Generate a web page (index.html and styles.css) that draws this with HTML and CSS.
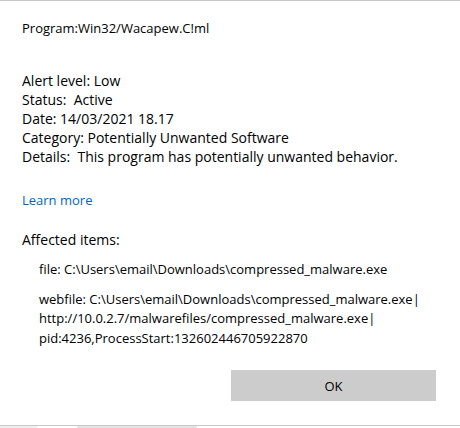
FILE: index.html
```html
<!DOCTYPE html>
<html>
<head>
<meta charset="utf-8">
<link rel="stylesheet" href="styles.css">
</head>
<body>
<div class="dialog">
  <div class="content">
    <div class="title">Program:Win32/Wacapew.C!ml</div>
    <div class="details">
      <div>Alert level: Low</div>
      <div>Status:&nbsp; Active</div>
      <div>Date: 14/03/2021 18.17</div>
      <div>Category: Potentially Unwanted Software</div>
      <div>Details:&nbsp; This program has potentially unwanted behavior.</div>
    </div>
    <a class="learn" href="#">Learn more</a>
    <div class="affected">Affected items:</div>
    <div class="item item-file">file: C:\Users\email\Downloads\compressed_malware.exe</div>
    <div class="item item-web">webfile: C:\Users\email\Downloads\compressed_malware.exe|<br>http://10.0.2.7/malwarefiles/compressed_malware.exe|<br>pid:4236,ProcessStart:132602446705922870</div>
    <div class="actions">
      <button class="ok">OK</button>
    </div>
  </div>
  <div class="footer">
    <span class="f1"></span><span class="f2"></span><span class="f3"></span>
  </div>
</div>
</body>
</html>
```
FILE: styles.css
```css
html, body {
  margin: 0;
  padding: 0;
  background: #fff;
}
body {
  width: 460px;
  height: 428px;
  overflow: hidden;
  font-family: "Open Sans", "Noto Sans", sans-serif;
  color: #000;
}
.dialog {
  border-top: 1px solid #c8c8c8;
  height: 427px;
  display: flex;
  flex-direction: column;
}
.content {
  padding: 18px 24px 0 22px;
  display: flex;
  flex-direction: column;
  height: 406px;
}
.title {
  font-size: 13px;
  line-height: 19px;
}
.details {
  margin-top: 33px;
  font-size: 14px;
  line-height: 19px;
}
.learn {
  margin-top: 25px;
  font-size: 13px;
  line-height: 19px;
  color: #0067c0;
  text-decoration: none;
  align-self: flex-start;
}
.affected {
  margin-top: 20px;
  font-size: 14px;
  line-height: 19px;
}
.item {
  font-size: 13px;
  line-height: 19.5px;
  padding-left: 17px;
  white-space: nowrap;
}
.item-file {
  margin-top: 11px;
}
.item-web {
  margin-top: 10px;
}
.actions {
  margin-top: 22px;
  display: flex;
  justify-content: flex-end;
}
.ok {
  width: 205px;
  height: 31px;
  border: none;
  background: #cccccc;
  font-family: "Open Sans", "Noto Sans", sans-serif;
  font-size: 13px;
  color: #000;
  padding: 0;
}
.footer {
  border-top: 1px solid #c8c8c8;
  margin-top: auto;
  height: 2px;
  display: flex;
}
.footer span {
  height: 2px;
  display: block;
}
.f1 { width: 37px; background: #f0f0f0; }
.f2 { width: 40px; background: #fff; }
.f3 { width: 120px; background: #e4e4e4; }
```
